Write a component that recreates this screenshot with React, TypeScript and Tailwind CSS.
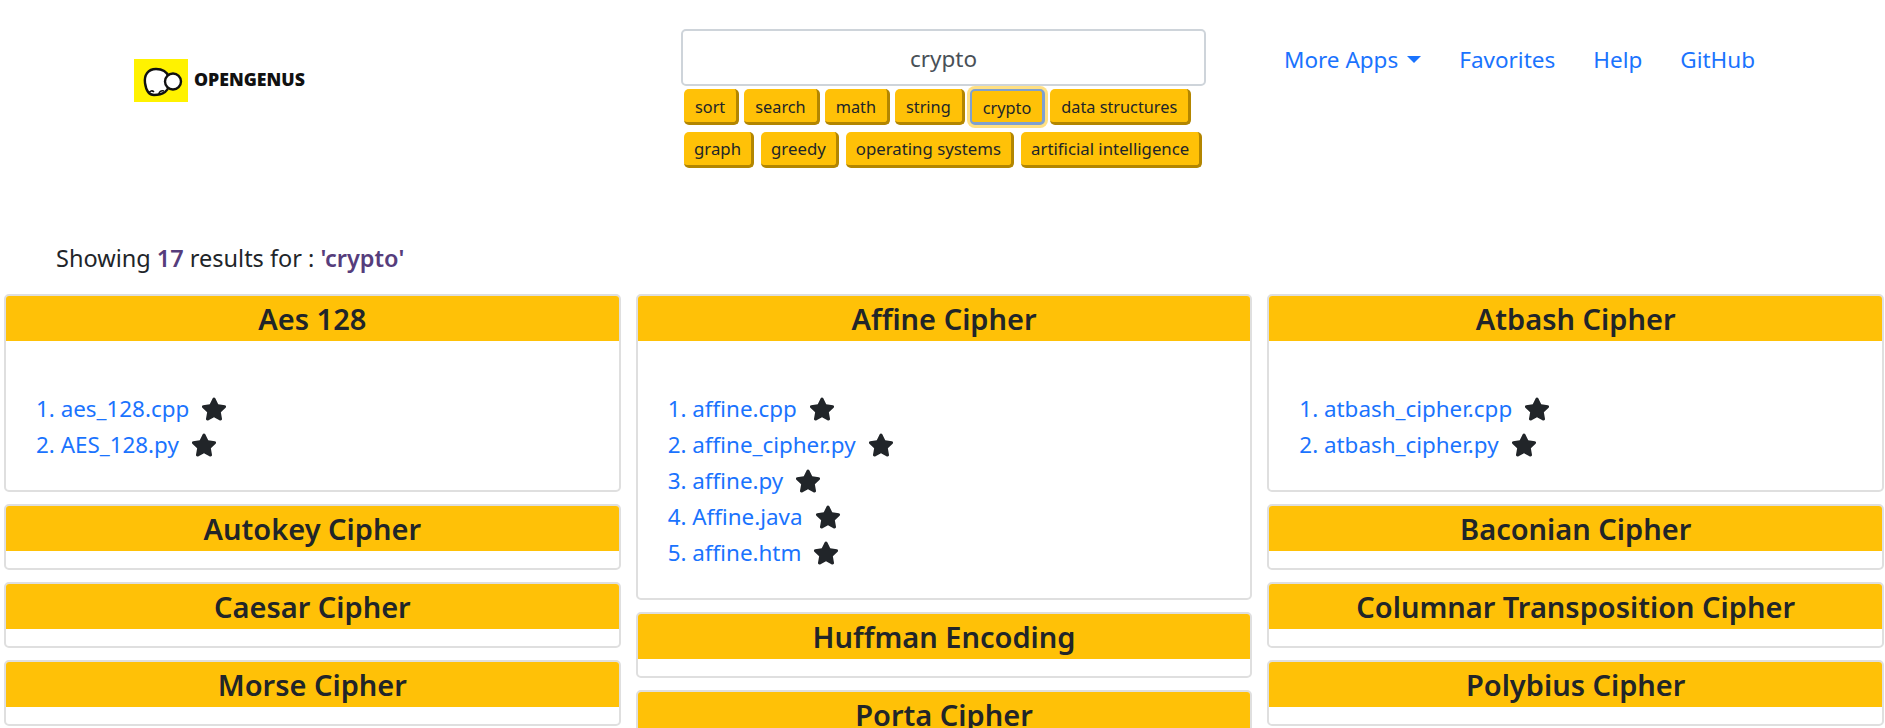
import { FaStar } from 'react-icons/fa'

const row1 = ['sort', 'search', 'math', 'string', 'crypto', 'data structures']
const row2 = ['graph', 'greedy', 'operating systems', 'artificial intelligence']

const columns = [
  [
    { title: 'Aes 128', files: ['aes_128.cpp', 'AES_128.py'] },
    { title: 'Autokey Cipher', files: [] },
    { title: 'Caesar Cipher', files: [] },
    { title: 'Morse Cipher', files: [] },
  ],
  [
    {
      title: 'Affine Cipher',
      files: ['affine.cpp', 'affine_cipher.py', 'affine.py', 'Affine.java', 'affine.htm'],
    },
    { title: 'Huffman Encoding', files: [] },
    { title: 'Porta Cipher', files: [] },
  ],
  [
    { title: 'Atbash Cipher', files: ['atbash_cipher.cpp', 'atbash_cipher.py'] },
    { title: 'Baconian Cipher', files: [] },
    { title: 'Columnar Transposition Cipher', files: [] },
    { title: 'Polybius Cipher', files: [] },
  ],
]

function Tag({ label, wide }: { label: string; wide?: boolean }) {
  const active = label === 'crypto'
  return (
    <button
      className={
        (wide ? 'text-[16.8px] px-[10px] pt-[2px] ' : 'text-[16.3px] px-[11px] pt-[3px] ') +
        (active
          ? 'h-9 shrink-0 whitespace-nowrap rounded-[5px] bg-[#ffc107] border-2 border-[#7fa0cf] border-r-[3px] border-b-[3px] leading-none text-[#212529] shadow-[0_0_0_3px_#ffe083]'
          : 'h-9 shrink-0 whitespace-nowrap rounded-[5px] bg-[#ffc107] border-r-[3px] border-b-[3px] border-[#b38600] leading-none text-[#212529]')
      }
    >
      {label}
    </button>
  )
}

function Card({ title, files }: { title: string; files: string[] }) {
  return (
    <div className="rounded-[5px] border-2 border-[#dfdfdf] overflow-hidden bg-white mb-[12px]">
      <h3 className="h-[45px] bg-[#ffc107] text-center text-[29px] leading-[45px] font-semibold text-[#212529]">
        {title}
      </h3>
      {files.length > 0 ? (
        <ol className="pl-[30px] pt-[50px] pb-[27px] text-[22.4px] text-[#1a73fe]">
          {files.map((file, i) => (
            <li key={file} className="h-9 flex items-center">
              <span>
                {i + 1}. {file}
              </span>
              <FaStar className="ml-[12px] text-[#212529]" size={26} />
            </li>
          ))}
        </ol>
      ) : (
        <div className="h-[17px]" />
      )}
    </div>
  )
}

export default function App() {
  return (
    <div className="h-[728px] w-[1885px] overflow-hidden bg-white font-['Noto_Sans',sans-serif] text-[#212529]">
      <header className="h-[189px] flex items-start">
        <div className="w-[134px]" />
        <div className="w-[547px] pt-[59px] flex items-center">
          <svg width="54" height="43" viewBox="0 0 54 43" className="shrink-0">
            <rect width="54" height="43" fill="#fff200" />
            <path
              d="M11 24c-1-8 3-14 11-14 6 0 11 3 13 8 1 6 0 12-4 15-3 2-7 3-11 3-6 0-8-5-9-12z"
              fill="#fff"
              stroke="#111"
              strokeWidth="2.4"
            />
            <circle cx="39" cy="22.5" r="8" fill="#fff" stroke="#111" strokeWidth="2.4" />
            <path d="M15 35c0-3 3-4 5-2M25 35c0-2 2-4 5-3" fill="none" stroke="#111" strokeWidth="1.6" />
          </svg>
          <span className="ml-[6px] -mt-[2px] font-['Open_Sans',sans-serif] text-[17.7px] font-extrabold text-[#111]">
            OPENGENUS
          </span>
        </div>
        <div className="w-[525px] pt-[29px]">
          <div className="h-[57px] pt-[3px] rounded-[5px] border-2 border-[#ced4da] flex items-center justify-center text-[22.5px] text-[#495057]">
            crypto
          </div>
          <div className="flex gap-[5px] pl-[3px] mt-[3px]">
            {row1.map((t) => (
              <Tag key={t} label={t} />
            ))}
          </div>
          <div className="flex gap-[7px] pl-[3px] mt-[7px]">
            {row2.map((t) => (
              <Tag key={t} label={t} wide />
            ))}
          </div>
        </div>
        <nav className="flex gap-[38px] pl-[78px] pt-[43px] text-[22.5px] text-[#1a73fe]">
          <span className="flex items-center">
            More Apps
            <span className="ml-[9px] border-x-[7px] border-t-[7px] border-x-transparent border-t-[#1a73fe]" />
          </span>
          <span>Favorites</span>
          <span>Help</span>
          <span>GitHub</span>
        </nav>
      </header>
      <p className="pl-[56px] h-[105px] pt-[54px] text-[23.5px] leading-[30px]">
        Showing <b className="font-semibold text-[#563d7c]">17</b> results for :{' '}
        <b className="font-semibold text-[#563d7c]">'crypto'</b>
      </p>
      <div className="grid grid-cols-3 gap-[15px] pl-[4px] pr-[1px]">
        {columns.map((col, i) => (
          <div key={i}>
            {col.map((card) => (
              <Card key={card.title} title={card.title} files={card.files} />
            ))}
          </div>
        ))}
      </div>
    </div>
  )
}
